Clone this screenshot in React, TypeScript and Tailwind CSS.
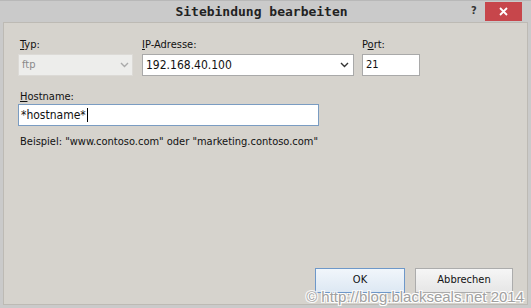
import React from "react";

const ui = { fontFamily: '"DejaVu Sans Condensed", "DejaVu Sans", Tahoma, sans-serif' };

function Chevron({ color = "#333" }: { color?: string }) {
  return (
    <svg width="9" height="6" viewBox="0 0 9 6">
      <path d="M1 1 L4.5 4.5 L8 1" fill="none" stroke={color} strokeWidth="1.4" />
    </svg>
  );
}

export default function App() {
  return (
    <div className="w-[531px] h-[308px] bg-[#cacaca] flex flex-col overflow-hidden" style={ui}>
      <div className="h-[22px] flex items-center relative border-t border-[#b8b8b8]">
        <div className="flex-1 text-center text-[13px] font-bold text-[#222] pr-[8px] pt-[1px]" style={{ fontFamily: '"DejaVu Sans Mono", monospace' }}>
          Sitebindung bearbeiten
        </div>
        <div className="absolute left-[471px] top-[2px] text-[11px] font-bold text-[#333]">?</div>
        <div className="absolute left-[485px] top-[1px] w-[37px] h-[19px] bg-[#c7464b] flex items-center justify-center">
          <svg width="9" height="9" viewBox="0 0 9 9">
            <path d="M1 1 L8 8 M8 1 L1 8" stroke="#fff" strokeWidth="1.8" />
          </svg>
        </div>
      </div>
      <div className="flex-1 mx-[3px] mb-[3px] bg-[#d6d3cd] border border-[#bdbab4] flex flex-col text-[11px] text-[#111] relative">
        <div className="flex pl-[14px] pt-[14px] gap-[9px]">
          <div className="flex flex-col w-[115px]">
            <span className="h-[17px] pl-[2px]"><u>T</u>yp:</span>
            <div className="h-[22px] bg-[#ededeb] border border-[#dcdad6] flex items-center justify-between px-[3px] text-[#8a8a8a]">
              <span>ftp</span>
              <Chevron color="#aaa" />
            </div>
          </div>
          <div className="flex flex-col w-[212px]">
            <span className="h-[17px]"><u>I</u>P-Adresse:</span>
            <div className="h-[22px] bg-white border border-[#a9a9a9] flex items-center justify-between pl-[3px] pr-[4px]">
              <span className="text-[12px]">192.168.40.100</span>
              <Chevron />
            </div>
          </div>
          <div className="flex flex-col w-[58px] -ml-[1px]">
            <span className="h-[17px]">P<u>o</u>rt:</span>
            <div className="h-[22px] bg-white border border-[#a9a9a9] flex items-center pl-[3px]">21</div>
          </div>
        </div>
        <div className="flex flex-col pl-[14px] mt-[13px]">
          <span className="h-[15px] pl-[2px]"><u>H</u>ostname:</span>
          <div className="w-[301px] h-[22px] bg-white border border-[#7a9cc2] flex items-center pl-[2px]">
            <span className="text-[12px]">*hostname*</span>
            <span className="w-px h-[14px] bg-black ml-px" />
          </div>
          <span className="mt-[8px] pl-[2px]">Beispiel: "www.contoso.com" oder "marketing.contoso.com"</span>
        </div>
        <div className="flex-1" />
        <div className="flex justify-end gap-[10px] pr-[14px] pb-[11px]">
          <div className="w-[90px] h-[25px] border border-[#6e98c9] bg-gradient-to-b from-[#f1f6fb] to-[#dde8f3] flex items-center justify-center">OK</div>
          <div className="w-[98px] h-[25px] border border-[#acacac] bg-gradient-to-b from-[#f6f6f6] to-[#e6e6e6] flex items-center justify-center">Abbrechen</div>
        </div>
        <div
          className="absolute right-[3px] bottom-[-4px] text-[15px] text-[#a0a0a0]"
          style={{ fontFamily: '"Liberation Sans", Arial, sans-serif', textShadow: "0 0 1px #fff, 1px 1px 0 #fff, -1px -1px 0 #fff, 1px -1px 0 #fff, -1px 1px 0 #fff" }}
        >
          © http://blog.blackseals.net 2014
        </div>
      </div>
    </div>
  );
}
